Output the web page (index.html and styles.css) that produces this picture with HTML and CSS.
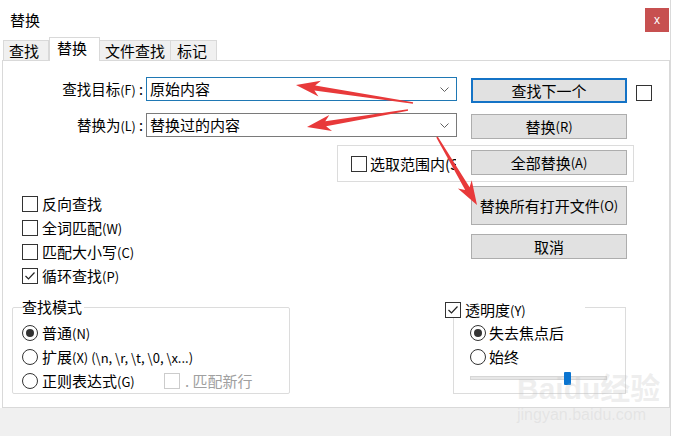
FILE: index.html
```html
<!DOCTYPE html>
<html lang="zh-CN">
<head>
<meta charset="utf-8">
<title>替换</title>
<link rel="stylesheet" href="styles.css">
</head>
<body>
<div class="dialog">
  <div class="titlebar">
    <span class="title">替换</span>
    <span class="close">x</span>
  </div>
  <div class="tabs">
    <div class="tab t1">查找</div>
    <div class="tab active">替换</div>
    <div class="tab t3">文件查找</div>
    <div class="tab t4">标记</div>
  </div>
  <div class="panel">
    <div class="top">
      <div class="field row1">
        <span class="flabel">查找目标<span class="lat">(F)</span> :</span>
        <div class="combo focus"><span class="ctext">原始内容</span><svg class="chev" width="9" height="5" viewBox="0 0 9 5"><polyline points="0.5,0.5 4.5,4.5 8.5,0.5" fill="none" stroke="#606060" stroke-width="1"/></svg></div>
      </div>
      <button class="btn primary c2 row1 b1">查找下一个</button>
      <span class="cb c3 row1 sidecb"></span>

      <div class="field row2">
        <span class="flabel">替换为<span class="lat">(L)</span> :</span>
        <div class="combo"><span class="ctext">替换过的内容</span><svg class="chev" width="9" height="5" viewBox="0 0 9 5"><polyline points="0.5,0.5 4.5,4.5 8.5,0.5" fill="none" stroke="#606060" stroke-width="1"/></svg></div>
      </div>
      <button class="btn c2 row2 b2">替换<span class="lat">(R)</span></button>

      <div class="selbox">
        <span class="cb"></span><span class="sellabel">选取范围内(S)</span>
      </div>
      <button class="btn c2 row3 b3">全部替换<span class="lat">(A)</span></button>
    </div>

    <div class="mid">
      <div class="checks">
        <div class="crow"><span class="cb"></span><span class="ctxt">反向查找</span></div>
        <div class="crow"><span class="cb"></span><span class="ctxt">全词匹配<span class="lat">(W)</span></span></div>
        <div class="crow"><span class="cb"></span><span class="ctxt">匹配大小写<span class="lat">(C)</span></span></div>
        <div class="crow"><span class="cb checked"><svg width="14" height="14" viewBox="0 0 14 14"><polyline points="2.5,7 5.5,10 11.5,3.5" fill="none" stroke="#222" stroke-width="1.2"/></svg></span><span class="ctxt">循环查找<span class="lat">(P)</span></span></div>
      </div>
      <div class="btncol">
        <button class="btn tall">替换所有打开文件<span class="lat">(O)</span></button>
        <button class="btn">取消</button>
      </div>
    </div>

    <div class="bottom">
      <div class="modebox">
        <span class="legend">查找模式</span>
        <div class="rrow"><span class="radio on"></span><span class="ctxt">普通<span class="lat">(N)</span></span></div>
        <div class="rrow"><span class="radio"></span><span class="ctxt">扩展<span class="lat">(X) (\n, \r, \t, \0, \x...)</span></span></div>
        <div class="rrow"><span class="rlabel"><span class="radio"></span><span class="ctxt">正则表达式<span class="lat">(G)</span></span></span><span class="cb disabled"></span><span class="dtxt">. 匹配新行</span></div>
      </div>
      <div class="transbox">
        <div class="tlegend"><span class="cb checked"><svg width="14" height="14" viewBox="0 0 14 14"><polyline points="2.5,7 5.5,10 11.5,3.5" fill="none" stroke="#222" stroke-width="1.2"/></svg></span><span class="ctxt">透明度<span class="lat">(Y)</span></span></div>
        <div class="trow first"><span class="radio on"></span><span class="ctxt">失去焦点后</span></div>
        <div class="trow"><span class="radio"></span><span class="ctxt">始终</span></div>
        <div class="slider"><div class="track"></div><div class="thumb" style="left:94px"></div></div>
      </div>
    </div>
  </div>
  <div class="footer"></div>
</div>

<svg class="arrows" width="673" height="436" viewBox="0 0 673 436">
  <polygon fill="#e8393a" points="296,85 318.5,96.5 314.4,90.4 412.9,103.8 413.1,102.2 315.2,85.4 320.9,80.7"/>
  <polygon fill="#e8393a" points="307,127 332,130.9 326.1,126.3 408.1,110.8 407.9,109.2 325.3,121.3 329.3,115.1"/>
  <polygon fill="#e8393a" points="477,205 471.7,180.2 469.6,187.3 437.7,136.6 436.3,137.4 465.2,189.9 457.9,188.4"/>
</svg>
<div class="watermark"><span class="wm1">Baidu经验</span><span class="wm2">jingyan.baidu.com</span></div>
</body>
</html>
```

FILE: styles.css
```css
html, body {
  margin: 0;
  padding: 0;
}
body {
  width: 673px;
  height: 436px;
  overflow: hidden;
  position: relative;
  background: #fff;
  font-family: "Noto Sans CJK SC", "Microsoft YaHei", sans-serif;
  font-size: 15px;
  color: #000;
}
.dialog {
  width: 670px;
  height: 436px;
  display: flex;
  flex-direction: column;
  background: #fff;
  border-right: 1px solid #dadada;
}
.titlebar {
  height: 37px;
  box-sizing: border-box;
  padding: 8px 1px 0 10px;
  display: flex;
  justify-content: space-between;
  align-items: flex-start;
  flex: none;
}
.title {
  line-height: 24px;
  font-size: 15px;
}
.close {
  width: 24px;
  height: 24px;
  background: #c75050;
  color: #fff;
  font-family: "Liberation Sans", sans-serif;
  font-size: 12px;
  display: flex;
  align-items: center;
  justify-content: center;
}
.tabs {
  height: 23px;
  flex: none;
  display: flex;
  align-items: flex-end;
  padding-left: 3px;
  position: relative;
  z-index: 1;
}
.tab {
  height: 20px;
  box-sizing: border-box;
  border: 1px solid #d9d9d9;
  border-bottom: none;
  background: #f0f0f0;
  font-size: 15px;
  line-height: 19px;
  padding-left: 5px;
}
.tab.t1 { width: 46px; }
.tab.active {
  width: 51px;
  height: 24px;
  margin-bottom: -1px;
  background: #fff;
  line-height: 19px;
  padding-left: 7px;
  border-left: 1px solid #d9d9d9;
  border-right: 1px solid #d9d9d9;
}
.tab.t3 { width: 71px; border-left: none; }
.tab.t4 { width: 46px; border-left: none; padding-left: 6px; }

.panel {
  height: 348px;
  box-sizing: border-box;
  margin-left: 2px;
  width: 668px;
  border: 1px solid #d9d9d9;
  flex: none;
  background: #fff;
}
.footer {
  flex: 1;
  background: #f0f0f0;
}
.lat {
  font-size: 13px;
}

/* top grid */
.top {
  margin-top: 16px;
  display: grid;
  grid-template-columns: 468px 165px 16px;
  grid-template-rows: 36px 32px 37px;
}
.field {
  grid-column: 1;
  display: flex;
  align-items: center;
  height: 24px;
  align-self: start;
}
.row1 { grid-row: 1; }
.row2 { grid-row: 2; }
.row3 { grid-row: 3; }
.c2 { grid-column: 2; }
.c3 { grid-column: 3; }
.flabel {
  width: 140px;
  text-align: right;
  font-size: 14.5px;
  line-height: 20px;
  margin-right: 3px;
  white-space: nowrap;
}
.flabel .lat { font-size: 12.5px; }
.combo {
  width: 311px;
  height: 24px;
  box-sizing: border-box;
  border: 1px solid #7a7a7a;
  display: flex;
  align-items: center;
  justify-content: space-between;
  padding: 0 7px 0 3px;
  background: #fff;
}
.combo.focus { border-color: #1f78b4; }
.ctext {
  font-size: 15px;
  line-height: 20px;
}
.chev { display: block; }

.btn {
  width: 156px;
  height: 25px;
  box-sizing: border-box;
  background: #e1e1e1;
  border: 1px solid #adadad;
  font-family: inherit;
  font-size: 15px;
  line-height: 20px;
  color: #000;
  padding: 0;
  margin: 0;
  display: flex;
  align-items: center;
  justify-content: center;
  align-self: start;
}
.btn.primary {
  border: 2px solid #1473c6;
}
.b1 { margin-top: 1px; }
.b2 { margin-top: 1px; }
.b3 { margin-top: 5px; }

.cb {
  width: 16px;
  height: 16px;
  box-sizing: border-box;
  border: 1px solid #333;
  background: #fff;
  display: inline-flex;
  align-items: center;
  justify-content: center;
  flex: none;
}
.cb svg { display: block; }
.cb.disabled { border-color: #cccccc; }
.sidecb {
  margin-top: 8px;
  align-self: start;
}

.selbox {
  grid-column: 1 / 3;
  grid-row: 3;
  margin-left: 334px;
  margin-right: 2px;
  height: 37px;
  box-sizing: border-box;
  border: 1px solid #dcdcdc;
  display: flex;
  align-items: center;
  padding-left: 13px;
}
.sellabel {
  width: 86px;
  margin-left: 3px;
  overflow: hidden;
  white-space: nowrap;
  line-height: 20px;
}

/* middle */
.mid {
  display: grid;
  grid-template-columns: 468px 156px;
}
.checks {
  padding: 10px 0 0 19px;
}
.crow {
  height: 24px;
  display: flex;
  align-items: center;
}
.ctxt {
  margin-left: 4px;
  line-height: 20px;
  white-space: nowrap;
}
.btncol {
  padding-top: 4px;
  display: flex;
  flex-direction: column;
  gap: 9px;
}
.btn.tall { height: 39px; }

/* bottom */
.bottom {
  display: flex;
  align-items: flex-start;
}
.modebox {
  margin: 19px 0 0 9px;
  width: 278px;
  height: 87px;
  box-sizing: border-box;
  border: 1px solid #dcdcdc;
  border-radius: 2px;
  padding-left: 9px;
}
.legend {
  display: block;
  width: max-content;
  margin: -11px 0 0 0;
  background: #fff;
  padding: 0 2px 0 0;
  line-height: 20px;
}
.legend + .rrow { margin-top: 4px; }
.rrow {
  height: 24px;
  display: flex;
  align-items: center;
}
.rlabel {
  width: 142px;
  display: flex;
  align-items: center;
}
.radio {
  width: 16px;
  height: 16px;
  box-sizing: border-box;
  border: 1px solid #333;
  border-radius: 50%;
  background: #fff;
  display: inline-flex;
  align-items: center;
  justify-content: center;
  flex: none;
}
.radio.on::after {
  content: "";
  width: 8px;
  height: 8px;
  border-radius: 50%;
  background: #333;
}
.dtxt {
  margin-left: 5px;
  color: #a0a0a0;
  line-height: 20px;
}

.transbox {
  margin: 19px 0 0 163px;
  width: 173px;
  height: 87px;
  box-sizing: border-box;
  border: 1px solid #dcdcdc;
}
.tlegend {
  width: 140px;
  height: 16px;
  margin: -6px 0 0 -9px;
  background: #fff;
  display: flex;
  align-items: center;
}
.trow {
  height: 24px;
  display: flex;
  align-items: center;
  padding-left: 16px;
}
.trow .ctxt { margin-left: 3px; }
.trow.first { margin-top: 3px; }
.slider {
  position: relative;
  margin: 2px 0 0 16px;
  width: 137px;
  height: 14px;
  display: flex;
  align-items: center;
}
.track {
  width: 137px;
  height: 4px;
  box-sizing: border-box;
  background: #e7e7e7;
  border: 1px solid #d6d6d6;
}
.thumb {
  position: absolute;
  top: 1px;
  width: 7px;
  height: 13px;
  background: #0a74d0;
  border-radius: 1px;
}

.arrows {
  position: absolute;
  left: 0;
  top: 0;
  pointer-events: none;
}
.watermark {
  position: absolute;
  left: 517px;
  top: 372px;
  display: flex;
  flex-direction: column;
  pointer-events: none;
  color: rgba(190, 190, 190, 0.25);
  font-family: "Liberation Sans", "Noto Sans CJK SC", sans-serif;
}
.wm1 {
  font-size: 30px;
  font-weight: bold;
  line-height: 34px;
}
.wm2 {
  font-size: 16px;
  line-height: 18px;
}
```
